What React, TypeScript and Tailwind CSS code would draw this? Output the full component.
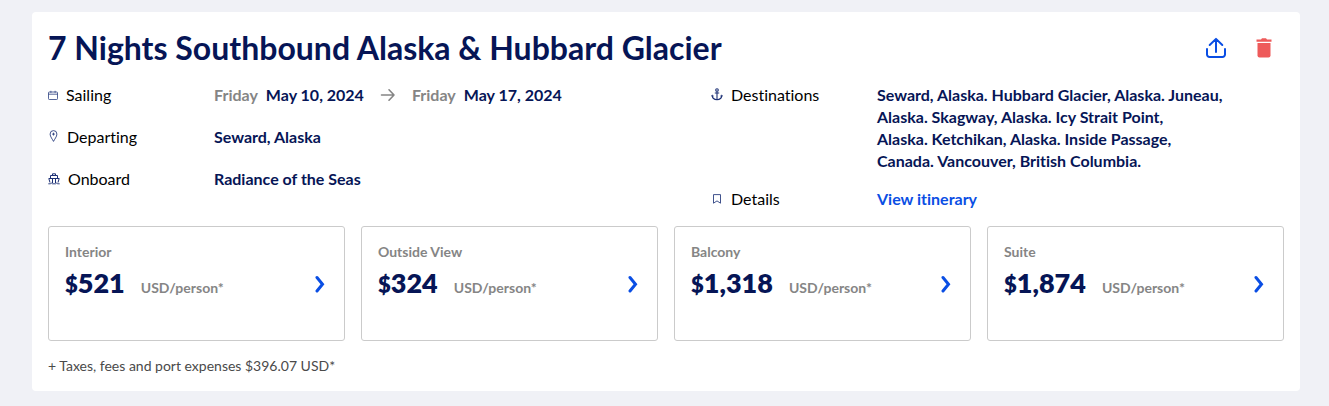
import type { ReactNode } from 'react';

const cabins = [
  { name: 'Interior', price: '521' },
  { name: 'Outside View', price: '324' },
  { name: 'Balcony', price: '1,318' },
  { name: 'Suite', price: '1,874' },
];

const ports = [
  'Seward, Alaska. Hubbard Glacier, Alaska. Juneau,',
  'Alaska. Skagway, Alaska. Icy Strait Point,',
  'Alaska. Ketchikan, Alaska. Inside Passage,',
  'Canada. Vancouver, British Columbia.',
];

function CalendarIcon() {
  return (
    <svg width="10" height="10" viewBox="0 0 10 10" fill="none" stroke="#2b3f80" strokeWidth="0.8" aria-hidden="true">
      <rect x="0.5" y="2" width="9" height="7.5" rx="0.8" />
      <path d="M0.5 4.2h9M2.9 0.8v2M7.1 0.8v2" />
    </svg>
  );
}

function PinIcon() {
  return (
    <svg width="11" height="15" viewBox="0 0 11 15" fill="none" stroke="#2b3f80" strokeWidth="0.9" aria-hidden="true">
      <path d="M5.5 11.4C4.6 9.4 2.1 6.7 2.1 4.1a3.4 3.5 0 0 1 6.8 0C8.9 6.7 6.4 9.4 5.5 11.4z" />
      <path d="M5.5 2.7v2.8M4.1 4.1h2.8" />
    </svg>
  );
}

function ShipIcon() {
  return (
    <svg width="12" height="12" viewBox="0 0 12 12" fill="none" stroke="#1c3075" strokeWidth="1" aria-hidden="true">
      <path d="M4.500 2.500V0.800h3v1.700M2.500 5.500v-3h7v3M0.800 5.500h10.400L10 9.500M0.800 5.500L2 9.500M4.500 5.500v4.500M7.500 5.500v4.500" />
      <path d="M0.300 10.800h2l1-.7 1.200.7h3l1.200-.7 1 .7h2" strokeWidth="0.9" />
    </svg>
  );
}

function AnchorIcon() {
  return (
    <svg width="12" height="15" viewBox="0 0 12 15" fill="none" stroke="#1c3075" strokeWidth="1.100" aria-hidden="true">
      <circle cx="6" cy="2" r="1.300" />
      <path d="M6 3.400v8.400M3.800 5h4.400M1.200 7.400C1.400 10.300 3.500 11.700 6 11.800c2.500-.1 4.600-1.500 4.800-4.400" />
      <path d="M0.200 8.500L1.300 7l1.500 1.300M9.200 8.300L10.700 7l1.100 1.500" strokeWidth="0.8" />
    </svg>
  );
}

function BookmarkIcon() {
  return (
    <svg width="12" height="10" viewBox="0 0 12 10" fill="none" stroke="#2b3f80" strokeWidth="0.9" aria-hidden="true">
      <path d="M2.500 0.600h7v8.600L6 6.900 2.500 9.200z" />
    </svg>
  );
}

function Row({ icon, label, children }: { icon: ReactNode; label: string; children: ReactNode }) {
  return (
    <div className="flex">
      <dt className="flex w-[166px] shrink-0 items-start gap-2 text-black">
        <span className="flex h-[22px] items-center">{icon}</span>
        {label}
      </dt>
      <dd className="font-bold text-[#061556]">{children}</dd>
    </div>
  );
}

function CabinCard({ name, price }: { name: string; price: string }) {
  return (
    <button type="button" className="flex h-[115px] items-start justify-between rounded-[3px] border border-[#cbcbcb] bg-white p-4 text-left">
      <span>
        <span className="block text-sm leading-[18px] font-bold text-[#858585]">{name}</span>
        <span className="mt-1 flex items-baseline leading-9 text-[#061556]">
          <span className="text-[22px] font-extrabold">$</span>
          <span className="text-[27px] font-extrabold">{price}</span>
          <span className="ml-4 text-sm font-bold text-[#858585]">USD/person*</span>
        </span>
      </span>
      <svg className="mt-8" width="14" height="18" viewBox="0 0 14 18" fill="none" stroke="#0a4ee4" strokeWidth="3" strokeLinecap="round" aria-hidden="true">
        <path d="M3 2.500L8.500 9.200 3 16" />
      </svg>
    </button>
  );
}

export default function App() {
  return (
    <main className="min-h-screen bg-[#f0f1f6] pt-3 pr-[29px] pb-[15px] pl-8 font-['Lato',sans-serif] [font-variant-ligatures:none]">
      <article className="rounded bg-white p-4">
        <header className="flex items-center justify-between">
          <h1 className="text-[32px] leading-10 font-bold text-[#061556]">7 Nights Southbound Alaska &amp; Hubbard Glacier</h1>
          <div className="flex gap-6 pr-2">
            <button type="button" aria-label="Share" className="flex size-6 items-center justify-center">
              <svg width="24" height="24" viewBox="0 0 24 24" fill="none" stroke="#0a4ee4" strokeWidth="2" strokeLinecap="round" strokeLinejoin="round" aria-hidden="true">
                <path d="M12 16V3M5.700 9L12 2.900 18.300 9M3 13v5.500A2.500 2.500 0 0 0 5.500 21h13a2.500 2.500 0 0 0 2.500-2.500V13" />
              </svg>
            </button>
            <button type="button" aria-label="Delete" className="flex size-6 items-center justify-center">
              <svg width="24" height="24" viewBox="0 0 24 24" fill="#ee5a5a" aria-hidden="true">
                <path d="M4.500 3.500H9L10 2.300h4l1 1.200h4.500V5.700h-15z" />
                <path d="M5.500 7h13v12.500a2 2 0 0 1-2 2h-9a2 2 0 0 1-2-2z" />
              </svg>
            </button>
          </div>
        </header>

        <div className="mt-4 grid grid-cols-[663fr_573fr] text-base leading-[22px]">
          <dl className="flex flex-col gap-5">
            <Row icon={<CalendarIcon />} label="Sailing">
              <span className="flex items-center gap-2">
                <span className="text-[#858585]">Friday</span>
                May 10, 2024
                <svg className="mx-2" width="16" height="14" viewBox="0 0 16 14" fill="none" stroke="#858585" strokeWidth="1.600" strokeLinecap="round" strokeLinejoin="round" aria-hidden="true">
                  <path d="M1.500 7h12.500M9 1.800L14 7l-5 5.200" />
                </svg>
                <span className="text-[#858585]">Friday</span>
                May 17, 2024
              </span>
            </Row>
            <Row icon={<PinIcon />} label="Departing">Seward, Alaska</Row>
            <Row icon={<ShipIcon />} label="Onboard">Radiance of the Seas</Row>
          </dl>
          <dl className="flex flex-col gap-4">
            <Row icon={<AnchorIcon />} label="Destinations">
              {ports.map((line) => (
                <span key={line} className="block">{line}</span>
              ))}
            </Row>
            <Row icon={<BookmarkIcon />} label="Details">
              <a href="#itinerary" className="text-[#0a4ee4]">View itinerary</a>
            </Row>
          </dl>
        </div>

        <div className="mt-4 grid grid-cols-4 gap-4">
          {cabins.map((c) => (
            <CabinCard key={c.name} {...c} />
          ))}
        </div>

        <p className="mt-4 text-sm leading-[18px] text-[#4a4a4a]">+ Taxes, fees and port expenses $396.07 USD*</p>
      </article>
    </main>
  );
}
